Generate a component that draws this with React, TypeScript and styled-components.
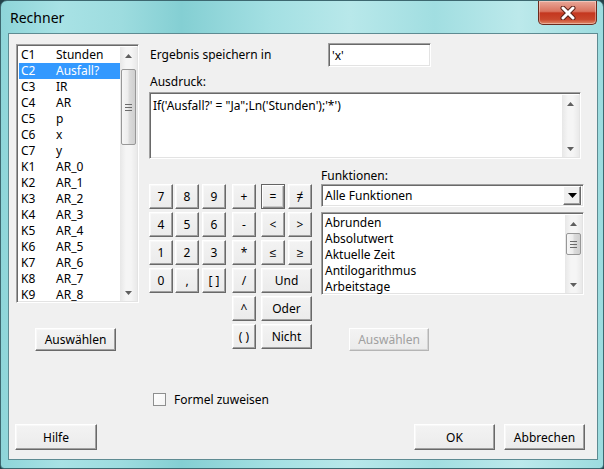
import styled, { createGlobalStyle, css } from "styled-components";

const GlobalStyle = createGlobalStyle`
  html, body {
    margin: 0;
    padding: 0;
    background: #24424a;
  }
  body {
    width: 604px;
    height: 469px;
    overflow: hidden;
    font-family: "Segoe UI", "Noto Sans", Arial, sans-serif;
    font-size: 12px;
    color: #000;
  }
`;

const Window = styled.div`
  width: 604px;
  height: 469px;
  box-sizing: border-box;
  border: 1px solid #3d6870;
  border-radius: 7px 7px 4px 4px;
  background: linear-gradient(
    90deg,
    #8ed5d9 0%,
    #a8e2e5 10%,
    #9ddcdf 20%,
    #84cfd3 30%,
    #a4e0e3 45%,
    #b8e8ea 58%,
    #a1dee1 72%,
    #bce9eb 86%,
    #9cdcdf 100%
  );
  display: flex;
  flex-direction: column;
  overflow: hidden;
`;

const TitleBar = styled.div`
  height: 32px;
  flex: none;
  display: flex;
  align-items: flex-start;
  padding-left: 9px;
`;

const Title = styled.div`
  align-self: center;
  margin-top: 1px;
  font-size: 14px;
  color: #000;
`;

const CloseButton = styled.div`
  margin-left: auto;
  margin-right: 6px;
  width: 59px;
  height: 24px;
  box-sizing: border-box;
  border: 1px solid #6b2a1e;
  border-top: none;
  border-radius: 0 0 5px 5px;
  background: linear-gradient(
    180deg,
    #e9a899 0%,
    #d9735f 45%,
    #c4371f 52%,
    #c9472c 80%,
    #e08a6a 100%
  );
  box-shadow: inset 0 0 0 1px rgba(255, 255, 255, 0.35);
  display: flex;
  align-items: center;
  justify-content: center;
`;

const Client = styled.div`
  flex: 1;
  margin: 0 5px 8px 7px;
  border: 1px solid #5e8b92;
  background: #f0f0f0;
  display: flex;
  flex-direction: column;
`;

const Main = styled.div`
  display: flex;
  padding: 10px 0 0 7px;
`;

const LeftCol = styled.div`
  width: 123px;
  display: flex;
  flex-direction: column;
`;

const sunken = css`
  box-sizing: border-box;
  border: 1px solid;
  border-color: #a0a0a0 #ffffff #ffffff #a0a0a0;
  box-shadow: inset 1px 1px 0 #696969, inset -1px -1px 0 #e3e3e3;
  background: #fff;
`;

const ListBox = styled.div<{ $height: number }>`
  ${sunken};
  height: ${(p) => p.$height}px;
  padding: 2px 1px 1px 2px;
  display: flex;
  overflow: hidden;
`;

const Rows = styled.div`
  flex: 1;
  min-width: 0;
`;

const ColumnRow = styled.div<{ $selected?: boolean }>`
  height: 16px;
  line-height: 16px;
  display: flex;
  padding-left: 2px;
  white-space: nowrap;
  background: ${(p) => (p.$selected ? "#3399ff" : "transparent")};
  color: ${(p) => (p.$selected ? "#fff" : "#000")};
`;

const ColId = styled.span`
  width: 35px;
  flex: none;
`;

const FuncRow = styled.div`
  height: 16px;
  line-height: 16px;
  padding-left: 1px;
  white-space: nowrap;
`;

const ScrollTrack = styled.div`
  width: 17px;
  flex: none;
  display: flex;
  flex-direction: column;
  background: linear-gradient(90deg, #e7e7e7, #f5f5f5 35%, #f5f5f5 65%, #e9e9e9);
`;

const ArrowCell = styled.div`
  height: 17px;
  flex: none;
  display: flex;
  align-items: center;
  justify-content: center;
`;

const Thumb = styled.div<{ $offset: number; $height: number }>`
  margin: ${(p) => p.$offset}px 1px 0 1px;
  height: ${(p) => p.$height}px;
  flex: none;
  box-sizing: border-box;
  border: 1px solid #979797;
  border-radius: 2px;
  background: linear-gradient(90deg, #f6f6f6, #ececec 45%, #dcdcdc 55%, #cfcfcf);
  display: flex;
  align-items: center;
  justify-content: center;
`;

const Spacer = styled.div`
  flex: 1;
`;

const Arrow = ({ up }: { up?: boolean }) => (
  <svg width="7" height="4" viewBox="0 0 7 4">
    <path d={up ? "M0 4 L3.5 0 L7 4 Z" : "M0 0 L3.5 4 L7 0 Z"} fill="#5f5f5f" />
  </svg>
);

const Grip = () => (
  <svg width="7" height="7" viewBox="0 0 7 7">
    <rect x="0" y="0" width="7" height="1" fill="#6b6b6b" />
    <rect x="0" y="3" width="7" height="1" fill="#6b6b6b" />
    <rect x="0" y="6" width="7" height="1" fill="#6b6b6b" />
  </svg>
);

const ScrollBar = ({ thumb }: { thumb?: { offset: number; height: number } }) => (
  <ScrollTrack>
    <ArrowCell>
      <Arrow up />
    </ArrowCell>
    {thumb && (
      <Thumb $offset={thumb.offset} $height={thumb.height}>
        <Grip />
      </Thumb>
    )}
    <Spacer />
    <ArrowCell>
      <Arrow />
    </ArrowCell>
  </ScrollTrack>
);

const Button = styled.div<{ $width?: number; $disabled?: boolean; $default?: boolean }>`
  box-sizing: border-box;
  width: ${(p) => (p.$width ? `${p.$width}px` : "auto")};
  height: 23px;
  border: 1px solid;
  border-color: #ffffff #696969 #696969 #ffffff;
  box-shadow: inset -1px -1px 0 #a0a0a0, inset 1px 1px 0 #f8f8f8;
  background: linear-gradient(180deg, #f3f3f3, #ebebeb);
  display: flex;
  align-items: center;
  justify-content: center;
  color: ${(p) => (p.$disabled ? "#a0a0a0" : "#000")};
  white-space: nowrap;
  ${(p) =>
    p.$disabled &&
    css`
      border-color: #ffffff #b5b5b5 #b5b5b5 #ffffff;
      box-shadow: inset -1px -1px 0 #d4d4d4;
    `}
  ${(p) =>
    p.$default &&
    css`
      border: 1px solid #646464;
      box-shadow: inset 1px 1px 0 #ffffff, inset -1px -1px 0 #8a8a8a,
        inset -2px -2px 0 #c8c8c8;
    `}
`;

const LeftButton = styled(Button)`
  margin: 25px 0 0 19px;
`;

const RightCol = styled.div`
  margin-left: 10px;
  width: 435px;
  display: flex;
  flex-direction: column;
`;

const ResultRow = styled.div`
  display: flex;
  align-items: center;
  height: 24px;
  margin-top: -1px;
`;

const Label = styled.label`
  line-height: 14px;
  white-space: nowrap;
`;

const ResultLabel = styled(Label)`
  width: 178px;
  padding-left: 1px;
`;

const TextInput = styled.input`
  ${sunken};
  width: 103px;
  height: 24px;
  padding: 0 3px;
  font: inherit;
  color: #000;
  outline: none;
`;

const ExpressionLabel = styled(Label)`
  margin-top: 8px;
  padding-left: 1px;
`;

const ExpressionBox = styled.div`
  ${sunken};
  margin-top: 3px;
  width: 432px;
  height: 67px;
  padding: 2px 1px 1px 2px;
  display: flex;
`;

const ExpressionText = styled.div`
  flex: 1;
  padding: 3px 0 0 1px;
  line-height: 16px;
  white-space: pre;
`;

const LowerRow = styled.div`
  display: flex;
  margin-top: 10px;
`;

const Keypad = styled.div`
  margin-top: 15px;
  display: grid;
  grid-template-columns: 26px 27px 30px 29px 27px 24px;
  grid-auto-rows: 25px;
  row-gap: 3px;
`;

const Key = styled(Button)<{ $col: number; $span?: number }>`
  grid-column: ${(p) => p.$col} / span ${(p) => p.$span ?? 1};
  width: ${(p) => (p.$span && p.$span > 1 ? "auto" : "24px")};
  height: 25px;
`;

const FuncCol = styled.div`
  margin-left: 9px;
  width: 263px;
  display: flex;
  flex-direction: column;
`;

const Select = styled.div`
  ${sunken};
  margin-top: 1px;
  height: 23px;
  padding: 2px 2px 2px 3px;
  display: flex;
  align-items: center;
`;

const SelectText = styled.span`
  flex: 1;
`;

const DropButton = styled.div`
  width: 18px;
  height: 19px;
  box-sizing: border-box;
  border: 1px solid;
  border-color: #ffffff #696969 #696969 #ffffff;
  box-shadow: inset -1px -1px 0 #a0a0a0;
  background: #f0f0f0;
  display: flex;
  align-items: center;
  justify-content: center;
`;

const FuncList = styled(ListBox)`
  margin-top: 5px;
`;

const FuncButton = styled(Button)`
  margin: 33px 0 0 28px;
`;

const CheckRow = styled.div`
  display: flex;
  align-items: center;
  margin: 41px 0 0 144px;
  height: 14px;
`;

const CheckBox = styled.span`
  width: 13px;
  height: 13px;
  box-sizing: border-box;
  border: 1px solid #8e8f8f;
  background: linear-gradient(135deg, #ffffff, #f4f4f4);
  margin-right: 8px;
`;

const Footer = styled.div`
  display: flex;
  align-items: center;
  margin-top: 18px;
  padding: 0 12px 0 6px;
  gap: 9px;
`;

const FooterButton = styled(Button)`
  height: 26px;
`;

const HelpButton = styled(FooterButton)`
  margin-right: auto;
`;

const columns: [string, string][] = [
  ["C1", "Stunden"],
  ["C2", "Ausfall?"],
  ["C3", "IR"],
  ["C4", "AR"],
  ["C5", "p"],
  ["C6", "x"],
  ["C7", "y"],
  ["K1", "AR_0"],
  ["K2", "AR_1"],
  ["K3", "AR_2"],
  ["K4", "AR_3"],
  ["K5", "AR_4"],
  ["K6", "AR_5"],
  ["K7", "AR_6"],
  ["K8", "AR_7"],
  ["K9", "AR_8"],
];

const functions = ["Abrunden", "Absolutwert", "Aktuelle Zeit", "Antilogarithmus", "Arbeitstage"];

type KeyDef = { label: string; col: number; span?: number; isDefault?: boolean };

const keys: KeyDef[] = [
  { label: "7", col: 1 },
  { label: "8", col: 2 },
  { label: "9", col: 3 },
  { label: "+", col: 4 },
  { label: "=", col: 5, isDefault: true },
  { label: "≠", col: 6 },
  { label: "4", col: 1 },
  { label: "5", col: 2 },
  { label: "6", col: 3 },
  { label: "-", col: 4 },
  { label: "<", col: 5 },
  { label: ">", col: 6 },
  { label: "1", col: 1 },
  { label: "2", col: 2 },
  { label: "3", col: 3 },
  { label: "*", col: 4 },
  { label: "≤", col: 5 },
  { label: "≥", col: 6 },
  { label: "0", col: 1 },
  { label: ",", col: 2 },
  { label: "[ ]", col: 3 },
  { label: "/", col: 4 },
  { label: "Und", col: 5, span: 2 },
  { label: "^", col: 4 },
  { label: "Oder", col: 5, span: 2 },
  { label: "( )", col: 4 },
  { label: "Nicht", col: 5, span: 2 },
];

export default function App() {
  return (
    <>
      <GlobalStyle />
      <Window>
        <TitleBar>
          <Title>Rechner</Title>
          <CloseButton>
            <svg width="16" height="14" viewBox="0 0 16 14">
              <path
                d="M3 2 L13 12 M13 2 L3 12"
                stroke="#5a2218"
                strokeWidth="5"
                strokeLinecap="round"
              />
              <path
                d="M3 2 L13 12 M13 2 L3 12"
                stroke="#ffffff"
                strokeWidth="3"
                strokeLinecap="round"
              />
            </svg>
          </CloseButton>
        </TitleBar>
        <Client>
          <Main>
            <LeftCol>
              <ListBox $height={259}>
                <Rows>
                  {columns.map(([id, name]) => (
                    <ColumnRow key={id} $selected={id === "C2"}>
                      <ColId>{id}</ColId>
                      <span>{name}</span>
                    </ColumnRow>
                  ))}
                </Rows>
                <ScrollBar thumb={{ offset: 5, height: 76 }} />
              </ListBox>
              <LeftButton $width={81}>Auswählen</LeftButton>
            </LeftCol>
            <RightCol>
              <ResultRow>
                <ResultLabel>Ergebnis speichern in</ResultLabel>
                <TextInput readOnly value="'x'" />
              </ResultRow>
              <ExpressionLabel>Ausdruck:</ExpressionLabel>
              <ExpressionBox>
                <ExpressionText>If('Ausfall?' = "Ja";Ln('Stunden');'*')</ExpressionText>
                <ScrollBar />
              </ExpressionBox>
              <LowerRow>
                <Keypad>
                  {keys.map((k) => (
                    <Key key={k.label} $col={k.col} $span={k.span} $default={k.isDefault}>
                      {k.label}
                    </Key>
                  ))}
                </Keypad>
                <FuncCol>
                  <Label>Funktionen:</Label>
                  <Select>
                    <SelectText>Alle Funktionen</SelectText>
                    <DropButton>
                      <svg width="9" height="5" viewBox="0 0 9 5">
                        <path d="M0 0 L4.5 5 L9 0 Z" fill="#000" />
                      </svg>
                    </DropButton>
                  </Select>
                  <FuncList $height={83}>
                    <Rows>
                      {functions.map((f) => (
                        <FuncRow key={f}>{f}</FuncRow>
                      ))}
                    </Rows>
                    <ScrollBar thumb={{ offset: 1, height: 22 }} />
                  </FuncList>
                  <FuncButton $width={80} $disabled>
                    Auswählen
                  </FuncButton>
                </FuncCol>
              </LowerRow>
            </RightCol>
          </Main>
          <CheckRow>
            <CheckBox />
            <span>Formel zuweisen</span>
          </CheckRow>
          <Footer>
            <HelpButton $width={82}>Hilfe</HelpButton>
            <FooterButton $width={81}>OK</FooterButton>
            <FooterButton $width={81}>Abbrechen</FooterButton>
          </Footer>
        </Client>
      </Window>
    </>
  );
}
